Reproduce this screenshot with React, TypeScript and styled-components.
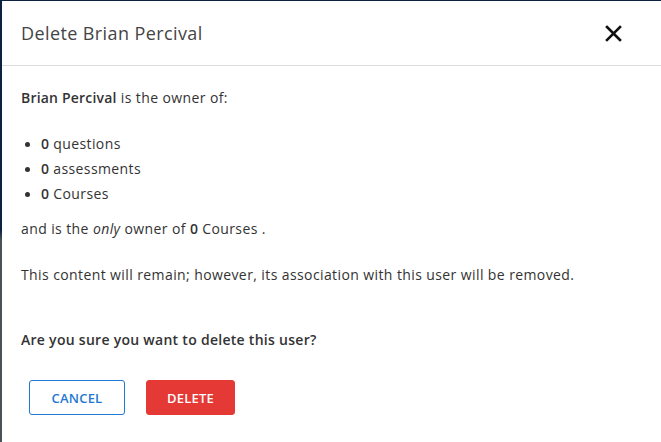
import React from "react";
import styled, { createGlobalStyle } from "styled-components";

const Global = createGlobalStyle`
  html, body { margin: 0; padding: 0; }
  body {
    background: linear-gradient(to bottom, #0c2340 0px, #0c2340 230px, #4b5159 240px, #4b5159 100%);
    font-family: "Open Sans", "Liberation Sans", sans-serif;
    overflow: hidden;
  }
`;

const Backdrop = styled.div`
  height: 442px;
  padding: 1px 0 0 2px;
  box-sizing: border-box;
  display: flex;
`;

const Modal = styled.div`
  flex: 1;
  background: #fff;
  display: flex;
  flex-direction: column;
`;

const Header = styled.div`
  height: 64px;
  border-bottom: 1px solid #dcdcdc;
  display: flex;
  align-items: center;
  justify-content: space-between;
  padding: 0 39px 0 19px;
`;

const Title = styled.h2`
  margin: 0;
  font-size: 18px;
  font-weight: 400;
  color: #444;
  letter-spacing: 0.4px;
`;

const CloseButton = styled.button`
  border: 0;
  background: none;
  padding: 0;
  width: 18px;
  height: 18px;
  display: flex;
  align-items: center;
  justify-content: center;
  cursor: pointer;
`;

const Body = styled.div`
  padding: 22px 19px 0 19px;
  color: #333;
  font-size: 14px;
  line-height: 20px;
  letter-spacing: 0.4px;
`;

const Para = styled.p<{ $mt: number }>`
  margin: ${(p) => p.$mt}px 0 0 0;
`;

const Strong = styled.b`
  font-weight: 600;
  letter-spacing: 0.2px;
`;

const Question = styled.p`
  margin: 45px 0 0 0;
  font-weight: 600;
  letter-spacing: 0.28px;
`;

const List = styled.ul`
  list-style: none;
  margin: 26px 0 0 0;
  padding: 0;
`;

const Item = styled.li`
  position: relative;
  padding-left: 20px;
  margin-bottom: 5px;
  &:last-child { margin-bottom: 0; }
  &::before {
    content: "";
    position: absolute;
    left: 4px;
    top: 8px;
    width: 5px;
    height: 5px;
    border-radius: 50%;
    background: #333;
  }
`;

const Footer = styled.div`
  display: flex;
  gap: 21px;
  padding: 30px 0 0 27px;
`;

const Btn = styled.button<{ $variant: "outline" | "danger"; $w: number }>`
  width: ${(p) => p.$w}px;
  height: 35px;
  box-sizing: border-box;
  border-radius: 3px;
  font-family: "Open Sans", "Liberation Sans", sans-serif;
  font-size: 13px;
  font-weight: 600;
  letter-spacing: 0.2px;
  text-transform: uppercase;
  cursor: pointer;
  border: 1px solid ${(p) => (p.$variant === "outline" ? "#1f78d1" : "#e53935")};
  background: ${(p) => (p.$variant === "outline" ? "#fff" : "#e53935")};
  color: ${(p) => (p.$variant === "outline" ? "#1f78d1" : "#fff")};
`;

export default function App() {
  return (
    <>
      <Global />
      <Backdrop>
        <Modal>
          <Header>
            <Title>Delete Brian Percival</Title>
            <CloseButton aria-label="Close">
              <svg width="17" height="17" viewBox="0 0 17 17">
                <path d="M2 2 L15 15 M15 2 L2 15" stroke="#111" strokeWidth="2.6" strokeLinecap="square" />
              </svg>
            </CloseButton>
          </Header>
          <Body>
            <Para $mt={0}>
              <Strong>Brian Percival</Strong> is the owner of:
            </Para>
            <List>
              <Item><Strong>0</Strong> questions</Item>
              <Item><Strong>0</Strong> assessments</Item>
              <Item><Strong>0</Strong> Courses</Item>
            </List>
            <Para $mt={15}>
              and is the <i>only</i> owner of <Strong>0</Strong> Courses .
            </Para>
            <Para $mt={26}>
              This content will remain; however, its association with this user will be removed.
            </Para>
            <Question>Are you sure you want to delete this user?</Question>
          </Body>
          <Footer>
            <Btn $variant="outline" $w={96}>Cancel</Btn>
            <Btn $variant="danger" $w={89}>Delete</Btn>
          </Footer>
        </Modal>
      </Backdrop>
    </>
  );
}
